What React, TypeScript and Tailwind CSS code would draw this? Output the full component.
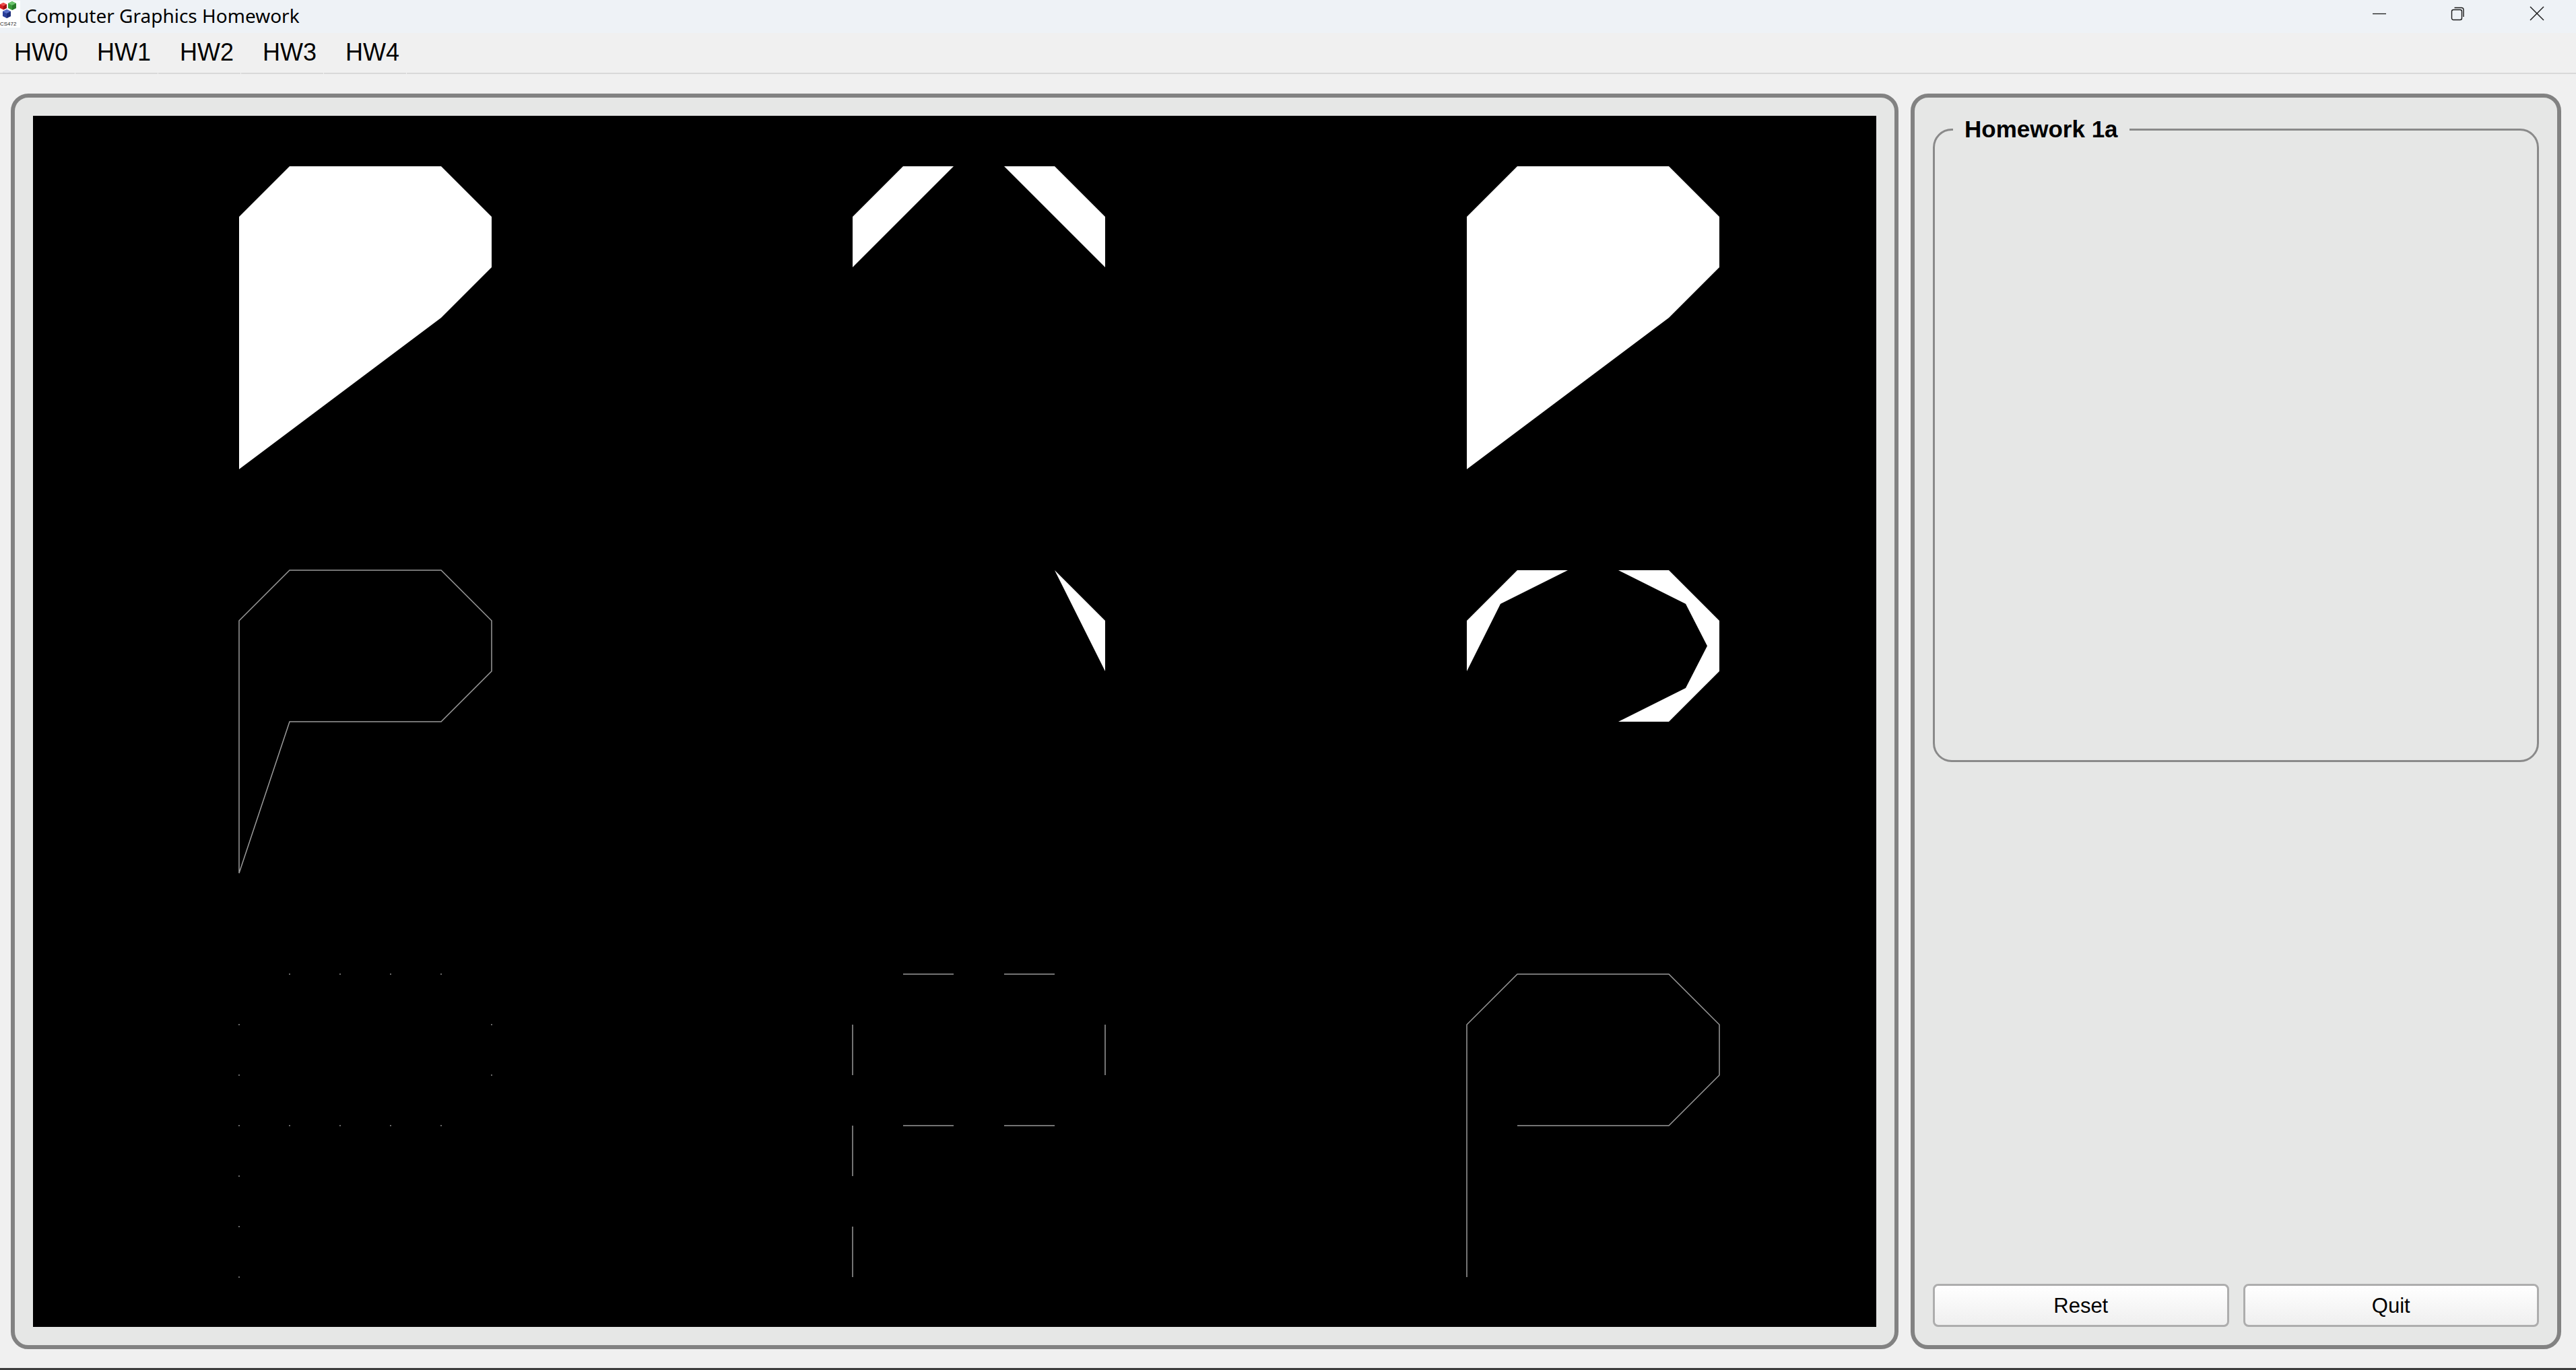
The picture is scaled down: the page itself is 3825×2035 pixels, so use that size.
import React from "react";

const U = 75;
const COLS = [306, 1217, 2129];
const ROWS = [75, 675, 1275];

type P = [number, number];

function pts(ox: number, oy: number, arr: P[]) {
  return arr.map(([x, y]) => `${ox + x * U},${oy + y * U}`).join(" ");
}

const FULL_P: P[] = [
  [0, 6],
  [0, 1],
  [1, 0],
  [4, 0],
  [5, 1],
  [5, 2],
  [4, 3],
];
const OUTLINE_P: P[] = [
  [0, 6],
  [0, 1],
  [1, 0],
  [4, 0],
  [5, 1],
  [5, 2],
  [4, 3],
  [1, 3],
];

const DOTS: P[] = [
  [1, 0], [2, 0], [3, 0], [4, 0],
  [0, 1], [0, 2], [0, 3], [0, 4], [0, 5], [0, 6],
  [5, 1], [5, 2],
  [1, 3], [2, 3], [3, 3], [4, 3],
];

const DASHES: [P, P][] = [
  [[1, 0], [2, 0]],
  [[3, 0], [4, 0]],
  [[1, 3], [2, 3]],
  [[3, 3], [4, 3]],
  [[0, 1], [0, 2]],
  [[0, 3], [0, 4]],
  [[0, 5], [0, 6]],
  [[5, 1], [5, 2]],
];

function Canvas() {
  const stroke = "#9a9a9a";
  return (
    <svg
      className="block w-full h-full"
      viewBox="0 0 2737 1799"
      preserveAspectRatio="none"
    >
      <rect x="0" y="0" width="2737" height="1799" fill="#000" />
      {/* row 1 */}
      <polygon points={pts(COLS[0], ROWS[0], FULL_P)} fill="#fff" />
      <polygon
        points={pts(COLS[1], ROWS[0], [[0, 1], [1, 0], [2, 0], [0, 2]])}
        fill="#fff"
      />
      <polygon
        points={pts(COLS[1], ROWS[0], [[3, 0], [4, 0], [5, 1], [5, 2]])}
        fill="#fff"
      />
      <polygon points={pts(COLS[2], ROWS[0], FULL_P)} fill="#fff" />
      {/* row 2 */}
      <polygon
        points={pts(COLS[0], ROWS[1], OUTLINE_P)}
        fill="none"
        stroke={stroke}
        strokeWidth="1.5"
      />
      <polygon
        points={pts(COLS[1], ROWS[1], [[4, 0], [5, 1], [5, 2]])}
        fill="#fff"
      />
      <polygon
        points={pts(COLS[2], ROWS[1], [[0, 1], [1, 0], [2, 0], [2 / 3, 2 / 3], [0, 2]])}
        fill="#fff"
      />
      <polygon
        points={pts(COLS[2], ROWS[1], [
          [3, 0],
          [4, 0],
          [5, 1],
          [5, 2],
          [4, 3],
          [3, 3],
          [13 / 3, 7 / 3],
          [4.76, 1.5],
          [13 / 3, 2 / 3],
        ])}
        fill="#fff"
      />
      {/* row 3 */}
      {DOTS.map(([x, y], i) => (
        <rect
          key={i}
          x={COLS[0] + x * U - 1}
          y={ROWS[2] + y * U - 1}
          width="2"
          height="2"
          fill="#6a6a6a"
        />
      ))}
      {DASHES.map(([a, b], i) => (
        <line
          key={i}
          x1={COLS[1] + a[0] * U}
          y1={ROWS[2] + a[1] * U}
          x2={COLS[1] + b[0] * U}
          y2={ROWS[2] + b[1] * U}
          stroke={stroke}
          strokeWidth="1.5"
        />
      ))}
      <polyline
        points={pts(COLS[2], ROWS[2], OUTLINE_P)}
        fill="none"
        stroke={stroke}
        strokeWidth="1.5"
      />
    </svg>
  );
}

function AppIcon() {
  return (
    <svg width="30" height="40" viewBox="0 0 30 40" className="block">
      <rect x="0" y="0" width="30" height="40" fill="#ffffff" />
      {/* red cube */}
      <polygon points="5,3 10,5.5 10,11 5,13.5 0,11 0,5.5" fill="#d42020" />
      <polygon points="5,3 10,5.5 5,8 0,5.5" fill="#ee5050" />
      <polygon points="5,8 10,5.5 10,11 5,13.5" fill="#a01010" />
      {/* green cube */}
      <polygon points="18,1 24,4 24,11 18,14 12,11 12,4" fill="#3a9a3a" />
      <polygon points="18,1 24,4 18,7 12,4" fill="#6cc46c" />
      <polygon points="18,7 24,4 24,11 18,14" fill="#2a7a2a" />
      {/* blue cube */}
      <polygon points="10,13 16,16 16,23 10,26 4,23 4,16" fill="#2a3f9a" />
      <polygon points="10,13 16,16 10,19 4,16" fill="#5a70c8" />
      <polygon points="10,19 16,16 16,23 10,26" fill="#1c2c78" />
      <text
        x="0"
        y="37"
        fontSize="8"
        fontFamily="Liberation Sans, Arial, sans-serif"
        fill="#222"
      >
        CS472
      </text>
    </svg>
  );
}

function TitleBar() {
  return (
    <div className="h-[49px] bg-[#eef2f6] flex items-center">
      <div className="w-[37px] h-full flex items-start pt-[1px]">
        <AppIcon />
      </div>
      <div className="flex-1 text-[28px] leading-none text-black font-['Noto_Sans',sans-serif] -mt-[3px]">
        Computer Graphics Homework
      </div>
      <div className="flex h-full items-start">
        <div className="w-[117px] h-[40px] flex items-center justify-center">
          <svg width="20" height="20" viewBox="0 0 20 20">
            <line x1="0" y1="10.5" x2="20" y2="10.5" stroke="#1b1b1b" strokeWidth="1.3" />
          </svg>
        </div>
        <div className="w-[117px] h-[40px] flex items-center justify-center">
          <svg width="22" height="22" viewBox="0 0 22 22">
            <rect x="1.5" y="5.5" width="15" height="15" rx="2.5" fill="none" stroke="#1b1b1b" strokeWidth="1.4" />
            <path d="M5.5 2.5 H16 a3 3 0 0 1 3 3 V16" fill="none" stroke="#1b1b1b" strokeWidth="1.4" />
          </svg>
        </div>
        <div className="w-[117px] h-[40px] flex items-center justify-center">
          <svg width="22" height="22" viewBox="0 0 22 22">
            <line x1="1" y1="1" x2="21" y2="21" stroke="#1b1b1b" strokeWidth="1.4" />
            <line x1="21" y1="1" x2="1" y2="21" stroke="#1b1b1b" strokeWidth="1.4" />
          </svg>
        </div>
      </div>
    </div>
  );
}

function MenuBar() {
  const items = ["HW0", "HW1", "HW2", "HW3", "HW4"];
  return (
    <div className="h-[61px] bg-[#f0f0f0] flex font-['Liberation_Sans',Arial,sans-serif]">
      <div className="flex -ml-[11px] gap-[1px]">
        {items.map((t) => (
          <div
            key={t}
            className="w-[122px] h-full pl-[32px] flex items-center border-b-2 border-[#d9d9d9] text-[36px] leading-[36px] text-black"
          >
            <span className="-mt-[1px]">{t}</span>
          </div>
        ))}
      </div>
      <div className="flex-1 ml-[1px] border-b-2 border-[#d9d9d9]" />
    </div>
  );
}

function Button({ label }: { label: string }) {
  return (
    <button className="h-[64px] rounded-[8px] border-[3px] border-[#adadad] bg-gradient-to-b from-[#ffffff] to-[#efefef] text-[31px] leading-none text-black font-['Liberation_Sans',Arial,sans-serif] flex items-center justify-center">
      {label}
    </button>
  );
}

export default function App() {
  return (
    <div className="w-[3825px] h-[2035px] bg-[#f0f0f0] flex flex-col overflow-hidden">
      <TitleBar />
      <MenuBar />
      <div className="flex-1 flex gap-[18px] pt-[29px] pb-[28px] pl-[16px] pr-[22px] min-h-0">
        <div className="flex-1 border-[6px] border-[#828282] rounded-[26px] bg-[#e6e7e6] p-[27px] min-w-0">
          <Canvas />
        </div>
        <div className="w-[966px] border-[6px] border-[#828282] rounded-[26px] bg-[#e6e7e6] p-[27px] flex flex-col">
          <fieldset className="h-[960px] border-[3px] border-[#8a8a8a] rounded-[28px] m-0 p-0 min-w-0">
            <legend className="ml-[27px] px-[17px] text-[35px] leading-[40px] font-bold text-black font-['Liberation_Sans',Arial,sans-serif]">
              Homework 1a
            </legend>
          </fieldset>
          <div className="flex-1" />
          <div className="grid grid-cols-2 gap-[21px]">
            <Button label="Reset" />
            <Button label="Quit" />
          </div>
        </div>
      </div>
      <div className="h-[3px] bg-[#3d3d3d]" />
    </div>
  );
}
